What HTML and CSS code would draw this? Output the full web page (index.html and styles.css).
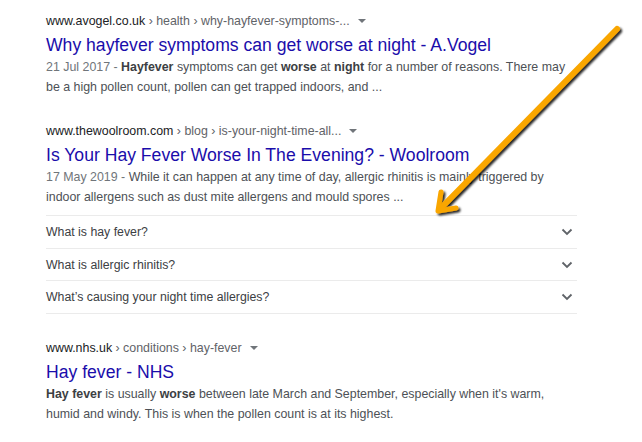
FILE: index.html
```html
<!DOCTYPE html>
<html lang="en">
<head>
<meta charset="utf-8">
<title>Search results</title>
<link rel="stylesheet" href="styles.css">
</head>
<body>
<main class="results">
  <section class="result">
    <div class="cite">www.avogel.co.uk<span class="crumb"> › health › why-hayfever-symptoms-...</span><span class="drop"></span></div>
    <h3 class="title">Why hayfever symptoms can get worse at night - A.Vogel</h3>
    <p class="snippet"><span class="date">21 Jul 2017 - </span><b>Hayfever</b> symptoms can get <b>worse</b> at <b>night</b> for a number of reasons. There may be a high pollen count, pollen can get trapped indoors, and ...</p>
  </section>
  <section class="result">
    <div class="cite">www.thewoolroom.com<span class="crumb"> › blog › is-your-night-time-all...</span><span class="drop"></span></div>
    <h3 class="title">Is Your Hay Fever Worse In The Evening? - Woolroom</h3>
    <p class="snippet"><span class="date">17 May 2019 - </span>While it can happen at any time of day, allergic rhinitis is mainly triggered by indoor allergens such as dust mite allergens and mould spores ...</p>
    <ul class="faq">
      <li class="faq-row"><span>What is hay fever?</span><svg class="chev" viewBox="0 0 12 8"><path d="M1.5 1.5 6 6l4.5-4.5"/></svg></li>
      <li class="faq-row"><span>What is allergic rhinitis?</span><svg class="chev" viewBox="0 0 12 8"><path d="M1.5 1.5 6 6l4.5-4.5"/></svg></li>
      <li class="faq-row"><span>What’s causing your night time allergies?</span><svg class="chev" viewBox="0 0 12 8"><path d="M1.5 1.5 6 6l4.5-4.5"/></svg></li>
    </ul>
  </section>
  <section class="result">
    <div class="cite">www.nhs.uk<span class="crumb"> › conditions › hay-fever</span><span class="drop"></span></div>
    <h3 class="title">Hay fever - NHS</h3>
    <p class="snippet"><b>Hay fever</b> is usually <b>worse</b> between late March and September, especially when it's warm, humid and windy. This is when the pollen count is at its highest.</p>
  </section>
</main>
<svg class="arrow" width="642" height="442" viewBox="0 0 642 442">
  <defs>
    <filter id="sh" x="-20%" y="-20%" width="140%" height="140%">
      <feDropShadow dx="2" dy="2" stdDeviation="1.2" flood-color="#000" flood-opacity="0.85"/>
    </filter>
  </defs>
  <g filter="url(#sh)" fill="none" stroke="#f9a602" stroke-width="6" stroke-linecap="round" stroke-linejoin="round">
    <path d="M617 29 L442 207"/>
    <path d="M441 192 L438 211 L456 208" stroke-width="5"/>
  </g>
</svg>
</body>
</html>
```
FILE: styles.css
```css
html, body {
  margin: 0;
  padding: 0;
  background: #fff;
}
body {
  font-family: "Liberation Sans", Arial, sans-serif;
  width: 642px;
  height: 442px;
  overflow: hidden;
  position: relative;
}
.results {
  padding: 11px 0 0 46px;
  width: 531px;
}
.result {
  margin-bottom: 24px;
}
.cite {
  font-size: 12.4px;
  line-height: 20px;
  color: #202124;
  display: flex;
  align-items: center;
  white-space: nowrap;
}
.crumb {
  color: #5f6368;
  white-space: pre;
}
.drop {
  width: 0;
  height: 0;
  margin-left: 8px;
  border-left: 4px solid transparent;
  border-right: 4px solid transparent;
  border-top: 4px solid #70757a;
}
.title {
  margin: 2px 0 1px;
  font-size: 17.6px;
  line-height: 24px;
  font-weight: normal;
  color: #1a0dab;
}
.snippet {
  margin: 0;
  font-size: 12.4px;
  line-height: 19.5px;
  color: #4d5156;
}
.snippet b {
  color: #3c4043;
}
.date {
  color: #70757a;
}
.faq {
  list-style: none;
  margin: 8px 0 0;
  padding: 0;
  border-top: 1px solid #ebebeb;
}
.faq-row {
  height: 31.7px;
  border-bottom: 1px solid #ebebeb;
  display: flex;
  align-items: center;
  justify-content: space-between;
  font-size: 12.3px;
  color: #3c4043;
}
.chev {
  width: 12px;
  height: 8px;
  margin-right: 4px;
  fill: none;
  stroke: #5f6368;
  stroke-width: 1.8;
}
.arrow {
  position: absolute;
  left: 0;
  top: 0;
  pointer-events: none;
}
```
